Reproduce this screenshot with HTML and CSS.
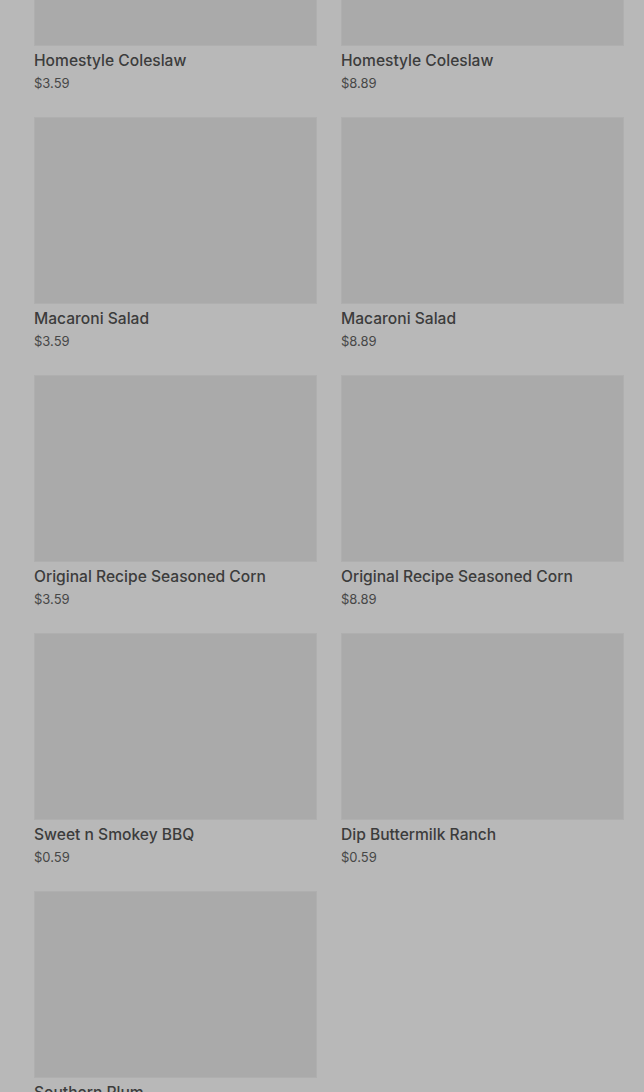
FILE: index.html
```html
<!DOCTYPE html>
<html lang="en">
<head>
<meta charset="utf-8">
<title>Menu</title>
<link rel="stylesheet" href="styles.css">
</head>
<body>
<main class="grid">
  <div class="card"><div class="img"></div><div class="name">Homestyle Coleslaw</div><div class="price">$3.59</div></div>
  <div class="card"><div class="img"></div><div class="name">Homestyle Coleslaw</div><div class="price">$8.89</div></div>
  <div class="card"><div class="img"></div><div class="name">Macaroni Salad</div><div class="price">$3.59</div></div>
  <div class="card"><div class="img"></div><div class="name">Macaroni Salad</div><div class="price">$8.89</div></div>
  <div class="card"><div class="img"></div><div class="name">Original Recipe Seasoned Corn</div><div class="price">$3.59</div></div>
  <div class="card"><div class="img"></div><div class="name">Original Recipe Seasoned Corn</div><div class="price">$8.89</div></div>
  <div class="card"><div class="img"></div><div class="name">Sweet n Smokey BBQ</div><div class="price">$0.59</div></div>
  <div class="card"><div class="img"></div><div class="name">Dip Buttermilk Ranch</div><div class="price">$0.59</div></div>
  <div class="card"><div class="img"></div><div class="name">Southern Plum</div><div class="price">$0.59</div></div>
</main>
</body>
</html>
```

FILE: styles.css
```css
html, body {
  margin: 0;
  padding: 0;
  background: #b8b8b8;
  height: 1092px;
  overflow: hidden;
}
body {
  font-family: Inter, "Liberation Sans", sans-serif;
  color: #3e3e3e;
}
.grid {
  display: grid;
  grid-template-columns: 1fr 1fr;
  column-gap: 24px;
  row-gap: 25px;
  padding: 0 20px 0 34px;
  margin-top: -141px;
}
.card {
  display: flex;
  flex-direction: column;
}
.img {
  height: 187px;
  background: #aaaaaa;
  box-sizing: border-box;
  border: 1px solid #afafaf;
}
.name {
  margin-top: 5px;
  font-size: 15.6px;
  line-height: 20px;
  font-weight: 500;
  color: #3c3c3c;
}
.price {
  margin-top: 3px;
  font-size: 13px;
  line-height: 18px;
  color: #474747;
}
```
